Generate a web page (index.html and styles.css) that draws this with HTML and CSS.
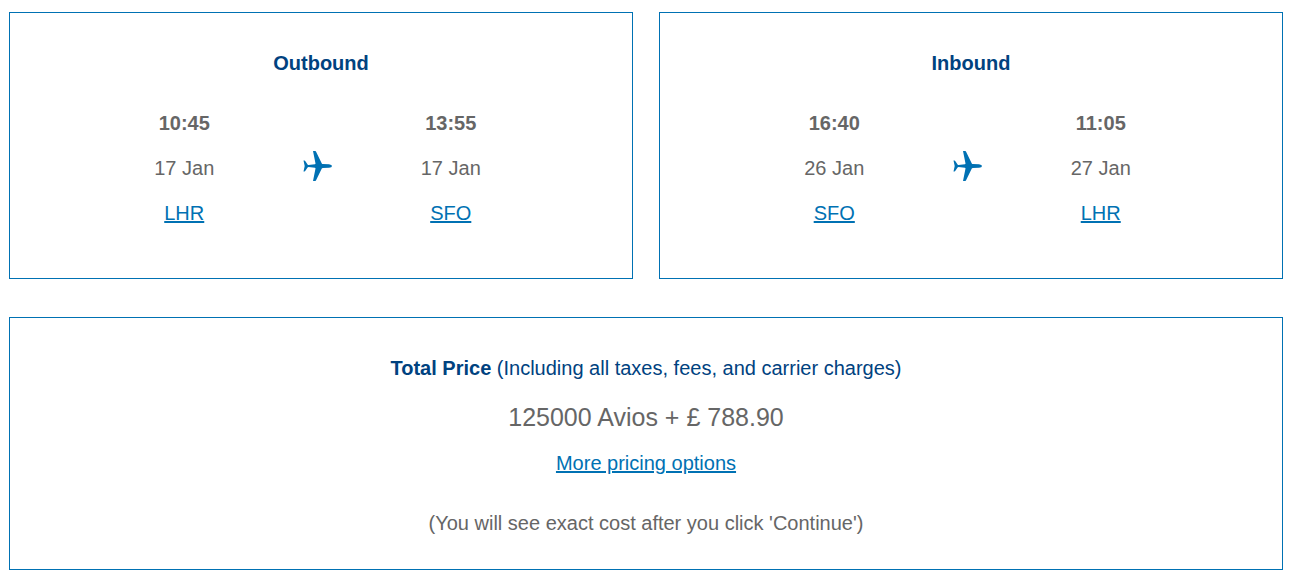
FILE: index.html
```html
<!DOCTYPE html>
<html lang="en-GB">
<head>
    <meta charset="UTF-8">
    <meta name="viewport" content="width=device-width, initial-scale=1.0">
    <title>Flight summary</title>
    <link rel="stylesheet" href="styles.css">
</head>
<body>
    <div class="flights">
        <section class="box flight">
            <h2>Outbound</h2>
            <div class="journey">
                <div class="stop">
                    <p class="time">10:45</p>
                    <p>17 Jan</p>
                    <p><a href="#">LHR</a></p>
                </div>
                <svg class="plane" viewBox="0 0 30 32" aria-hidden="true">
                    <path d="M10 1h2.200q.6.100 1 1l5.600 11.600q.3.500 1 .5l6.200.1q3 .4 3 1.800t-3 1.800l-6.200.1q-.7 0-1 .5L13.200 30q-.4.900-1 1H10l2.500-12.600q0-.6-.6-.6L5.500 17q-.6 0-.9.500l-2.400 3.600q-.2.400-.7.400H.5L1.700 16 .5 10.500h1q.5 0 .7.400l2.400 3.600q.3.500.9.500l6.400-.8q.6 0 .6-.6z"/>
                </svg>
                <div class="stop">
                    <p class="time">13:55</p>
                    <p>17 Jan</p>
                    <p><a href="#">SFO</a></p>
                </div>
            </div>
        </section>

        <section class="box flight">
            <h2>Inbound</h2>
            <div class="journey">
                <div class="stop">
                    <p class="time">16:40</p>
                    <p>26 Jan</p>
                    <p><a href="#">SFO</a></p>
                </div>
                <svg class="plane" viewBox="0 0 30 32" aria-hidden="true">
                    <path d="M10 1h2.200q.6.100 1 1l5.600 11.600q.3.500 1 .5l6.200.1q3 .4 3 1.800t-3 1.800l-6.200.1q-.7 0-1 .5L13.200 30q-.4.900-1 1H10l2.500-12.600q0-.6-.6-.6L5.500 17q-.6 0-.9.500l-2.400 3.600q-.2.400-.7.400H.5L1.700 16 .5 10.500h1q.5 0 .7.400l2.400 3.600q.3.500.9.500l6.400-.8q.6 0 .6-.6z"/>
                </svg>
                <div class="stop">
                    <p class="time">11:05</p>
                    <p>27 Jan</p>
                    <p><a href="#">LHR</a></p>
                </div>
            </div>
        </section>
    </div>

    <section class="box price">
        <p class="price-title"><strong>Total Price</strong> (Including all taxes, fees, and carrier charges)</p>
        <p class="amount">125000 Avios + £ 788.90</p>
        <p><a href="#">More pricing options</a></p>
        <p class="note">(You will see exact cost after you click 'Continue')</p>
    </section>
</body>
</html>
```
FILE: styles.css
```css
body {
    margin: 0;
    padding: 12px 9px;
    font-family: "Liberation Sans", Arial, sans-serif;
    font-size: 20px;
    line-height: 30px;
    color: #666;
    background-color: #fff;
}
h2, p {
    margin: 0;
}
a {
    color: #0071b3;
}
.box {
    box-sizing: border-box;
    border: 1px solid #0071b3;
    text-align: center;
}
.flights {
    display: flex;
    gap: 26px;
    margin-bottom: 38px;
}
.flight {
    flex: 1;
    padding: 35px 0 50px;
}
.flight h2 {
    margin-bottom: 30px;
    font-size: 20px;
    line-height: 30px;
    color: #00427f;
}
.journey {
    display: grid;
    grid-template-columns: 1fr 30px 1fr;
    align-items: center;
    padding: 0 63px 0 56px;
}
.stop p + p {
    margin-top: 15px;
}
.time {
    font-weight: bold;
}
.plane {
    width: 30px;
    height: 32px;
    margin-bottom: 4px;
    fill: #0071b3;
}
.price {
    padding: 35px 20px 31px;
}
.price-title {
    color: #00427f;
}
.amount {
    margin: 15px 0 12px;
    font-size: 25px;
    line-height: 38px;
}
.note {
    margin-top: 30px;
}
```
